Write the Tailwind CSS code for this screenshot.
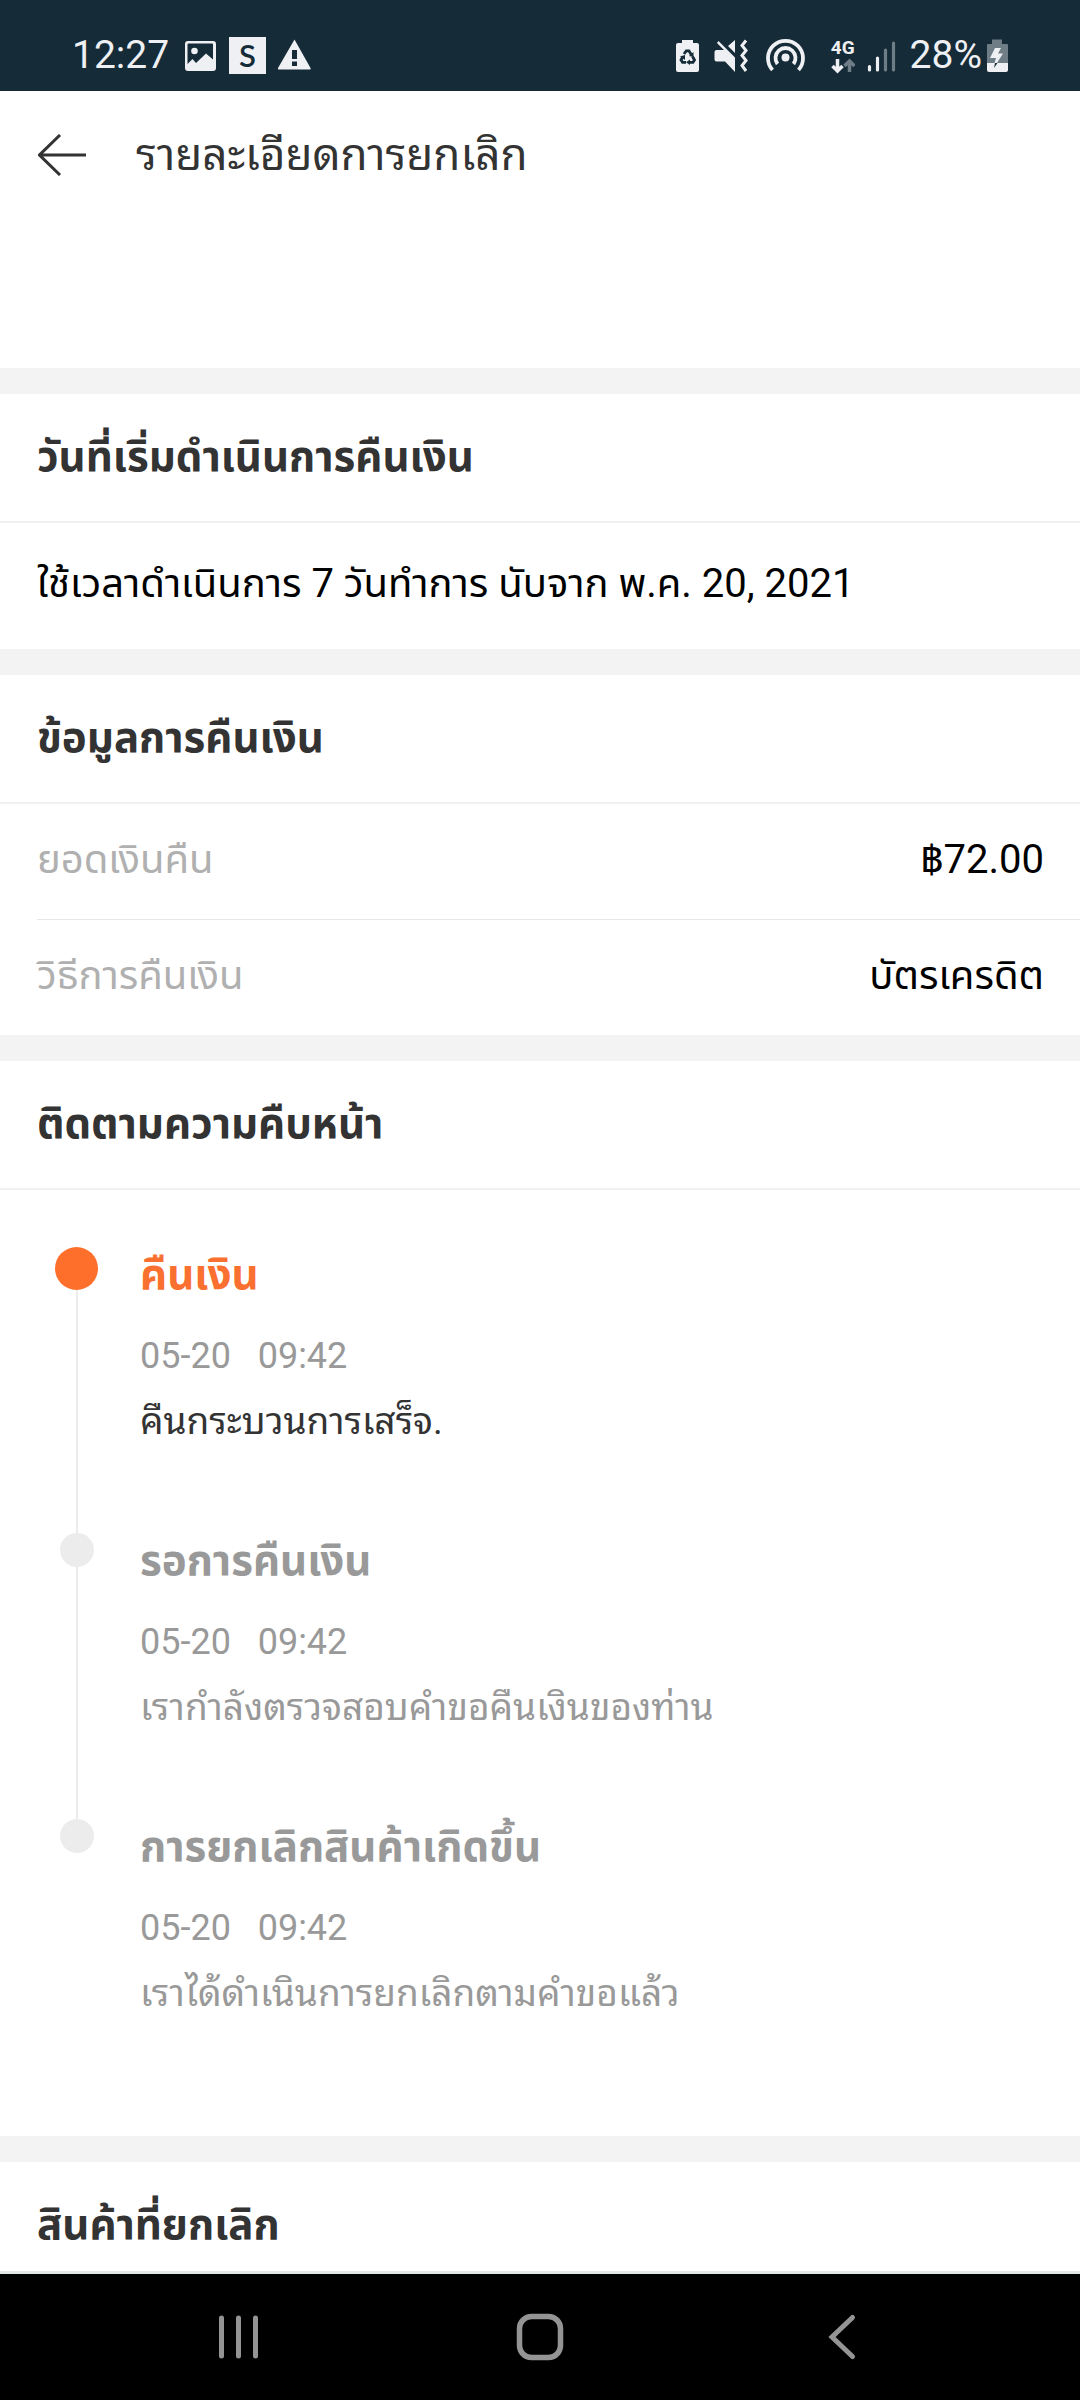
<!DOCTYPE html>
<html lang="th">
<head>
<meta charset="utf-8">
<meta name="viewport" content="width=device-width, initial-scale=1">
<title>รายละเอียดการยกเลิก</title>
<script src="https://cdn.jsdelivr.net/npm/@tailwindcss/browser@4"></script>
</head>
<body class="flex min-h-screen flex-col bg-white font-[Roboto,'Noto_Sans_Thai','Noto_Sans',sans-serif] text-[#333333]">

<!-- Status bar -->
<div class="flex h-[91px] items-center justify-between bg-[#152b38] pt-5 pr-[72px] pl-[72px] text-[39px] leading-none text-[#eef0f3]">
  <div class="flex items-center gap-3">
    <span class="w-[100px]">12:27</span>
    <svg class="h-9 w-[33px]" viewBox="184 37 33 36" fill="none"><path fill="#eef0f3" fill-rule="evenodd" d="M188 40h25a3 3 0 0 1 3 3v24a3 3 0 0 1-3 3h-25a3 3 0 0 1-3-3V43a3 3 0 0 1 3-3zm.5 2.500a1 1 0 0 0-1 1V63l5-5 3.500 4 10-9.500 7 6V43.500a1 1 0 0 0-1-1z"/><circle cx="194.500" cy="50" r="3.300" fill="#eef0f3"/></svg>
    <span class="flex size-[37px] items-center justify-center bg-[#eef0f3] font-[Lato] text-[31px] font-semibold text-[#152b38]">S</span>
    <svg class="h-9 w-[34px]" viewBox="278 37 34 36"><path fill="#eef0f3" fill-rule="evenodd" d="M294.500 38.500 310.500 67q.500 1.500-1 1.500H279q-1.500 0-1-1.500zM292 49v9h5v-9zm0 11.500V65h5v-4.500z"/></svg>
  </div>
  <div class="flex items-center gap-3">
    <svg class="h-9 w-[27px]" viewBox="675 37 27 36"><path fill="#eef0f3" d="M682 39h11v3h4a2 2 0 0 1 2 2v25a2 2 0 0 1-2 2h-19a2 2 0 0 1-2-2V44a2 2 0 0 1 2-2h4z"/><g fill="none" stroke="#152b38" stroke-width="2.800"><path d="m684 53 2.300-3.200h2.600l2.300 3.600M692.500 55.500l2 3.500-1.500 2.300h-3.500M686 61.300h-3.500L681 59l2-3.700"/></g><path fill="#152b38" d="m689 55 4.500-4v5zM690 58.500v5.500l-4-2.700zM680 55.500l5-1.500v5z"/></svg>
    <svg class="h-9 w-[35px]" viewBox="714 37 35 36"><path fill="#eef0f3" d="M718.500 40 735 56.500V71l-10-10.500h-8.500a2 2 0 0 1-2-2V51a2 2 0 0 1 2-2h7.500l-7-7zM728 45l7-6v13z"/><path fill="none" stroke="#eef0f3" stroke-width="3" d="m746 39.500-4 5 4 5-4 5 4 5-4 5 4 5.500"/></svg>
    <svg class="h-9 w-[50px]" viewBox="761 37 50 36" fill="none" stroke="#eef0f3" stroke-width="3.800"><path d="M772.500 69a17.500 17.500 0 1 1 26 0"/><path d="M777.500 63a10 10 0 1 1 16 0"/><circle cx="785.500" cy="56.500" r="4" fill="#eef0f3" stroke="none"/></svg>
    <div class="flex w-8 flex-col items-end">
      <span class="text-[19px] leading-5 font-bold">4G</span>
      <svg class="h-4 w-6" viewBox="829 57 24 16" fill="none" stroke-width="3.500"><path stroke="#eef0f3" d="M835.500 58v12m-5-5 5 5 5-5"/><path stroke="#6e7d86" d="M847.500 71V60m-5 5 5-5 5 5"/></svg>
    </div>
    <svg class="h-9 w-[31px]" viewBox="867 37 31 36" fill="none" stroke-linecap="round" stroke-width="3.200"><path stroke="#eef0f3" d="M869.500 65.500v3.500M877.500 57v12"/><path stroke="#6e7d86" d="M885.500 49v20M893.500 42v27"/></svg>
    <span class="flex items-center gap-1"><span>28%</span>
    <svg class="h-9 w-[22px]" viewBox="986 37 22 36"><path fill="#6e7d86" d="M992 38.500h10V43h5a1 1 0 0 1 1 1v18h-21V44a1 1 0 0 1 1-1h4z"/><path fill="#eef0f3" d="M987 62h21v7a2 2 0 0 1-2 2h-17a2 2 0 0 1-2-2z"/><path fill="#eef0f3" d="m995 47-5 10h6l-1.500 5h2.500l6-9.500h-5l3-5.500z"/><path fill="#152b38" d="M995 62h2.500l-3.500 5z"/></svg></span>
  </div>
</div>

<!-- App bar -->
<header class="flex h-[277px] items-start pt-8 pl-[38px]">
  <button type="button" aria-label="ย้อนกลับ" class="flex h-16 w-[98px] items-center">
    <svg class="h-[42px] w-[50px]" viewBox="0 0 50 42" fill="none" stroke="#333" stroke-width="3"><path d="M48 21H1.500M22 1 1.500 21 22 41"/></svg>
  </button>
  <h1 class="font-[Roboto,'Noto_Sans_Thai_Looped','Noto_Looped_Thai',Loma,Garuda,Waree,Umpush,'Noto_Sans_Thai',sans-serif] text-[44px] leading-[64px]">รายละเอียดการยกเลิก</h1>
</header>

<main class="flex-1">
  <section class="border-t-[26px] border-[#f3f3f3]">
    <h2 class="border-b-2 border-[#f0f0f0] px-[37px] pt-[31px] pb-[33px] text-[42px] leading-[63px] font-bold">วันที่เริ่มดำเนินการคืนเงิน</h2>
    <p class="px-[37px] pt-[30px] pb-[34px] text-[40px] leading-[62px] text-black">ใช้เวลาดำเนินการ 7 วันทำการ นับจาก พ.ค. 20, 2021</p>
  </section>

  <section class="border-t-[26px] border-[#f3f3f3]">
    <h2 class="border-b-2 border-[#f0f0f0] px-[37px] pt-[31px] pb-[33px] text-[42px] leading-[63px] font-bold">ข้อมูลการคืนเงิน</h2>
    <dl class="pl-[37px] text-[40px] leading-[65px]">
      <div class="flex justify-between border-b border-[#e8e8e8] pt-[23px] pr-[36px] pb-[27px]">
        <dt class="text-[#b0b0b0]">ยอดเงินคืน</dt>
        <dd class="text-black">฿72.00</dd>
      </div>
      <div class="flex justify-between pt-[23px] pr-[36px] pb-[27px]">
        <dt class="text-[#b0b0b0]">วิธีการคืนเงิน</dt>
        <dd class="text-black">บัตรเครดิต</dd>
      </div>
    </dl>
  </section>

  <section class="border-t-[26px] border-[#f3f3f3]">
    <h2 class="border-b-2 border-[#f0f0f0] px-[37px] pt-[31px] pb-[33px] text-[42px] leading-[63px] font-bold">ติดตามความคืบหน้า</h2>
    <ol class="pt-[57px] pb-[31px] pl-[55px] text-[#999999]">
      <li class="flex h-[286px] gap-[42px]">
        <div class="flex w-[43px] flex-col items-center">
          <span class="size-[43px] shrink-0 rounded-full bg-[#ff6f2c]"></span>
          <span class="w-[2px] flex-1 bg-[#ececec]"></span>
        </div>
        <div>
          <h3 class="text-[42px] leading-[56px] font-bold text-[#fa7030]">คืนเงิน</h3>
          <p class="mt-5 text-[36px] leading-[66px] whitespace-pre">05-20   09:42</p>
          <p class="font-[Roboto,'Noto_Sans_Thai_Looped','Noto_Looped_Thai',Loma,Garuda,Waree,Umpush,'Noto_Sans_Thai',sans-serif] text-[37px] leading-[66px] text-[#333333]">คืนกระบวนการเสร็จ.</p>
        </div>
      </li>
      <li class="flex h-[286px] gap-[42px]">
        <div class="flex w-[43px] flex-col items-center">
          <span class="size-[34px] shrink-0 rounded-full bg-[#ececec]"></span>
          <span class="w-[2px] flex-1 bg-[#ececec]"></span>
        </div>
        <div>
          <h3 class="text-[42px] leading-[56px] font-bold">รอการคืนเงิน</h3>
          <p class="mt-5 text-[36px] leading-[66px] whitespace-pre">05-20   09:42</p>
          <p class="font-[Roboto,'Noto_Sans_Thai_Looped','Noto_Looped_Thai',Loma,Garuda,Waree,Umpush,'Noto_Sans_Thai',sans-serif] text-[37px] leading-[66px]">เรากำลังตรวจสอบคำขอคืนเงินของท่าน</p>
        </div>
      </li>
      <li class="flex h-[286px] gap-[42px]">
        <div class="flex w-[43px] flex-col items-center">
          <span class="size-[34px] shrink-0 rounded-full bg-[#ececec]"></span>
        </div>
        <div>
          <h3 class="text-[42px] leading-[56px] font-bold">การยกเลิกสินค้าเกิดขึ้น</h3>
          <p class="mt-5 text-[36px] leading-[66px] whitespace-pre">05-20   09:42</p>
          <p class="font-[Roboto,'Noto_Sans_Thai_Looped','Noto_Looped_Thai',Loma,Garuda,Waree,Umpush,'Noto_Sans_Thai',sans-serif] text-[37px] leading-[66px]">เราได้ดำเนินการยกเลิกตามคำขอแล้ว</p>
        </div>
      </li>
    </ol>
  </section>

  <section class="border-t-[26px] border-[#f3f3f3]">
    <h2 class="px-[37px] pt-[31px] pb-[15px] text-[42px] leading-[63px] font-bold">สินค้าที่ยกเลิก</h2>
  </section>
</main>

<!-- System navigation -->
<nav class="grid h-[129px] grid-cols-3 border-t-[3px] border-[#e4e8e9] bg-black px-[87px]">
  <button type="button" aria-label="แอปล่าสุด" class="flex items-center justify-center"><svg class="h-12 w-12" viewBox="0 0 48 48" stroke="#949494" stroke-width="5" stroke-linecap="round"><path d="M7.500 5v38M24.500 5v38M41.500 5v38"/></svg></button>
  <button type="button" aria-label="หน้าหลัก" class="flex items-center justify-center"><svg class="h-12 w-12" viewBox="0 0 48 48" fill="none" stroke="#949494" stroke-width="5.500"><rect x="3.500" y="3.500" width="41" height="41" rx="12"/></svg></button>
  <button type="button" aria-label="กลับ" class="flex items-center justify-center"><svg class="h-12 w-12" viewBox="0 0 48 48" fill="none" stroke="#949494" stroke-width="5" stroke-linecap="round"><path d="M34.500 4.500 14 24 34.500 43.500"/></svg></button>
</nav>
</body>
</html>
